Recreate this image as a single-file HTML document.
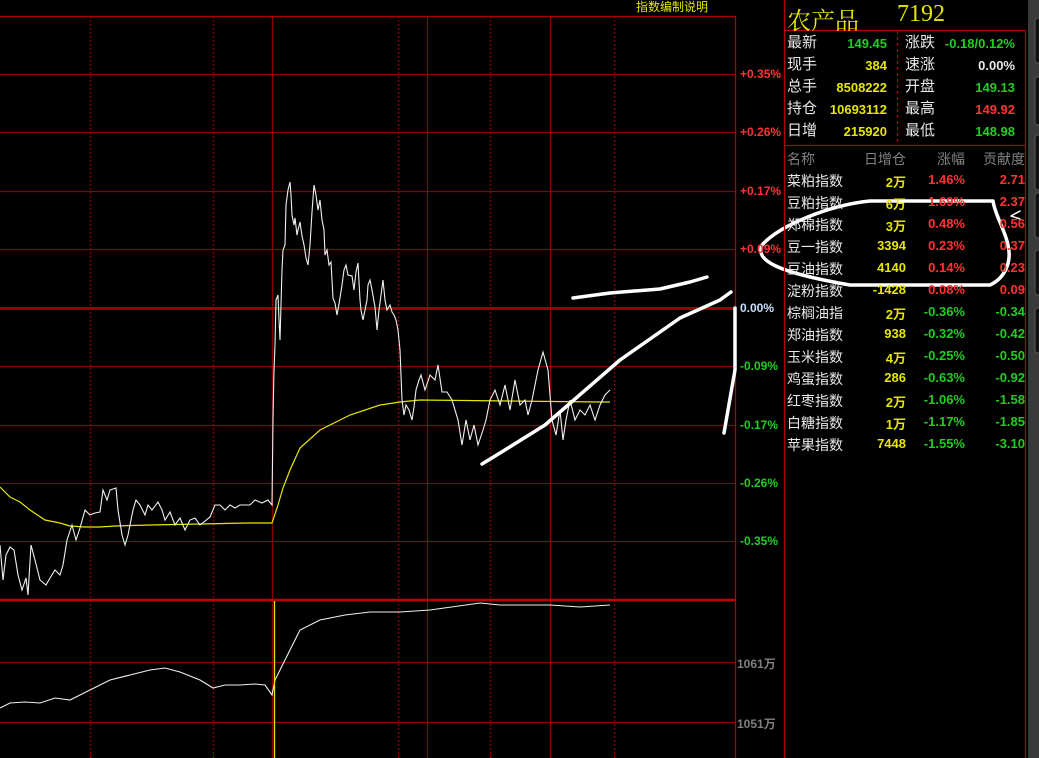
<!DOCTYPE html>
<html><head><meta charset="utf-8"><style>
body{margin:0;background:#000;width:1039px;height:758px;overflow:hidden;position:relative;font-family:"Liberation Sans","Noto Sans CJK SC",sans-serif}
.t{position:absolute;white-space:nowrap;font-size:14px}
.y{color:#e6e600}.g{color:#22cc22}.r{color:#ff3333}.w{color:#e8e8e8}.gr{color:#808080}.b{color:#c8e0ff}
.ax{position:absolute;left:740px;font-size:12px;font-weight:bold}
.num{font-weight:bold;font-size:13px}
</style></head><body>
<svg width="1039" height="758" style="position:absolute;left:0;top:0">
<g stroke="#8a0000" stroke-width="1.3" fill="none">
<line x1="0" y1="16.5" x2="736" y2="16.5" stroke="#b00000"/>
<line x1="0" y1="74.5" x2="736" y2="74.5"/><line x1="0" y1="132.5" x2="736" y2="132.5"/>
<line x1="0" y1="191.5" x2="736" y2="191.5"/><line x1="0" y1="249.5" x2="736" y2="249.5"/>
<line x1="0" y1="366.5" x2="736" y2="366.5"/><line x1="0" y1="425.5" x2="736" y2="425.5"/>
<line x1="0" y1="483.5" x2="736" y2="483.5"/><line x1="0" y1="541.5" x2="736" y2="541.5"/>
<line x1="0" y1="662.5" x2="736" y2="662.5"/><line x1="0" y1="722.5" x2="736" y2="722.5"/>
<line x1="272.5" y1="16" x2="272.5" y2="758"/><line x1="427.5" y1="16" x2="427.5" y2="758"/>
<line x1="550.5" y1="16" x2="550.5" y2="758"/><line x1="735.5" y1="16" x2="735.5" y2="758" stroke="#b00000"/>
<g stroke-dasharray="2,2"><line x1="90.5" y1="16" x2="90.5" y2="758"/><line x1="213.5" y1="16" x2="213.5" y2="758"/><line x1="398.5" y1="16" x2="398.5" y2="758"/><line x1="490.5" y1="16" x2="490.5" y2="758"/><line x1="614.5" y1="16" x2="614.5" y2="758"/></g>
<line x1="0" y1="308.5" x2="736" y2="308.5" stroke="#9a0000" stroke-width="3"/>
<line x1="0" y1="600" x2="736" y2="600" stroke="#c00000" stroke-width="2.5"/>
</g>
<polyline fill="none" stroke="#e6e600" stroke-width="1.2" points="0,487 10,497 20,502 30,510 45,520 60,523 70,526 85,527 100,527 115,526 150,525 200,524 247,523 272,523 278,505 283,488 290,470 300,448 320,430 350,415 380,405 400,402 420,400 600,402 610,402"/>
<polyline fill="none" stroke="#f0f0f0" stroke-width="1.1" points="0,545 3,580 6,555 10,547 14,550 18,575 22,590 26,578 28,595 31,545 35,560 40,580 46,585 50,578 55,570 60,575 63,565 67,540 72,525 76,540 80,528 85,510 90,515 95,513 100,512 103,490 107,500 110,490 116,488 118,510 122,535 125,545 128,535 133,510 136,500 140,505 145,515 148,505 152,510 158,502 162,510 165,520 170,512 175,525 180,518 185,530 190,520 195,518 200,525 210,517 215,505 220,505 225,510 230,505 235,508 240,505 250,505 255,500 262,503 268,500 272,505 273,418 274,370 275,345 276,300 278,295 279,320 280,340 282,270 283,250 285,245 286,205 288,190 290,182 291,195 292,215 294,225 295,218 297,235 298,230 300,222 302,236 304,245 306,258 308,265 310,245 312,212 314,185 316,195 318,210 320,200 322,220 324,230 325,255 327,250 329,265 331,262 333,298 335,303 337,315 340,298 342,285 344,270 346,265 348,275 352,276 354,290 356,272 358,263 360,300 361,310 363,320 365,310 367,300 368,285 370,280 372,290 375,307 377,330 379,310 381,295 383,280 385,300 387,310 390,305 392,312 394,315 396,320 398,330 400,350 402,400 404,415 406,405 409,410 412,420 414,407 416,390 419,380 421,375 425,390 430,375 435,380 438,365 442,392 447,392 452,400 458,420 462,445 466,420 470,440 474,425 478,445 483,430 486,420 490,400 495,390 500,405 505,385 510,410 515,380 520,405 525,400 528,415 532,400 538,370 543,352 548,370 552,420 556,435 560,410 563,440 566,420 570,400 575,420 580,410 585,415 590,405 595,420 600,405 605,395 610,390"/>
<polyline fill="none" stroke="#f0f0f0" stroke-width="1.1" points="0,708 10,703 25,702 40,703 55,698 70,700 90,690 110,680 130,675 150,670 165,668 180,672 200,680 213,688 225,685 240,685 255,684 265,685 272,695 275,680 285,660 300,630 320,620 345,615 370,612 400,612 430,610 480,603 500,605 550,605 580,607 610,605"/>
<line x1="274.5" y1="601" x2="274.5" y2="758" stroke="#e6e600" stroke-width="1.3"/>
<g fill="none" stroke="#fff" stroke-width="3.5" stroke-linecap="round" stroke-linejoin="round">
<polyline points="573,298 610,293 660,289 690,282 707,277"/>
<polyline points="482,464 500,453 545,425 620,360 680,318 720,300 731,292"/>
<polyline points="735,308 735,370 728,410 724,433"/>
<path d="M993,201 L870,201 C830,205 780,225 762,245 C755,260 775,272 850,285 L990,285 C1005,278 1012,262 1008,245 C1005,230 995,215 993,201"/>
<polyline points="1020,211 1011,216 1020,219" stroke-width="1.5"/>
</g>
<g stroke="#b00000" stroke-width="1.3" fill="none">
<line x1="784.5" y1="0" x2="784.5" y2="758"/>
<line x1="1025.5" y1="30" x2="1025.5" y2="758"/>
<line x1="784" y1="30.5" x2="1026" y2="30.5"/>
<line x1="784" y1="145.5" x2="1026" y2="145.5"/>
<line x1="897.5" y1="31" x2="897.5" y2="145" stroke-dasharray="3,3"/>
</g>
<rect x="1028" y="0" width="11" height="758" fill="#3a3a3a"/>
<g fill="#111" stroke="#555"><rect x="1035" y="18" width="10" height="45" rx="3"/><rect x="1035" y="77" width="10" height="48" rx="3"/><rect x="1035" y="135" width="10" height="55" rx="3"/><rect x="1035" y="193" width="10" height="45" rx="3"/><rect x="1035" y="250" width="10" height="45" rx="3"/><rect x="1035" y="308" width="10" height="45" rx="3"/></g>
</svg>
<div class="t y" style="left:636px;top:-2px;font-size:12px">指数编制说明</div>
<div class="ax r" style="top:67px">+0.35%</div><div class="ax r" style="top:125px">+0.26%</div>
<div class="ax r" style="top:184px">+0.17%</div><div class="ax r" style="top:242px">+0.09%</div>
<div class="ax b" style="top:301px">0.00%</div>
<div class="ax g" style="top:359px">-0.09%</div><div class="ax g" style="top:418px">-0.17%</div>
<div class="ax g" style="top:476px">-0.26%</div><div class="ax g" style="top:534px">-0.35%</div>
<div class="ax gr" style="left:737px;top:655px">1061万</div><div class="ax gr" style="left:737px;top:715px">1051万</div>
<div class="t y" style="left:787px;top:1px;font-size:24px;font-family:'Liberation Serif','Noto Serif CJK SC',serif">农产品</div>
<div class="t y" style="left:897px;top:1px;font-size:24px;font-family:'Liberation Serif',serif">7192</div>
<div style="position:absolute;left:787px;top:32px;width:240px;font-size:15px;line-height:22px">
<div class="t w" style="left:0;top:0;font-size:15px">最新</div><div class="t g num" style="right:140px;top:1px">149.45</div><div class="t w" style="left:118px;top:0;font-size:15px">涨跌</div><div class="t g num" style="right:12px;top:1px">-0.18/0.12%</div>
<div class="t w" style="left:0;top:22px;font-size:15px">现手</div><div class="t y num" style="right:140px;top:23px">384</div><div class="t w" style="left:118px;top:22px;font-size:15px">速涨</div><div class="t w num" style="right:12px;top:23px">0.00%</div>
<div class="t w" style="left:0;top:44px;font-size:15px">总手</div><div class="t y num" style="right:140px;top:45px">8508222</div><div class="t w" style="left:118px;top:44px;font-size:15px">开盘</div><div class="t g num" style="right:12px;top:45px">149.13</div>
<div class="t w" style="left:0;top:66px;font-size:15px">持仓</div><div class="t y num" style="right:140px;top:67px">10693112</div><div class="t w" style="left:118px;top:66px;font-size:15px">最高</div><div class="t r num" style="right:12px;top:67px">149.92</div>
<div class="t w" style="left:0;top:88px;font-size:15px">日增</div><div class="t y num" style="right:140px;top:89px">215920</div><div class="t w" style="left:118px;top:88px;font-size:15px">最低</div><div class="t g num" style="right:12px;top:89px">148.98</div>
</div>
<div style="position:absolute;left:787px;top:148px;width:240px;font-size:14px;line-height:22px">
<div class="t gr" style="left:0;top:0">名称</div><div class="t gr" style="left:77px;top:0">日增仓</div><div class="t gr" style="left:150px;top:0">涨幅</div><div class="t gr" style="left:196px;top:0">贡献度</div>
</div>
<div id="rows"></div>
<script>
const rows=[["菜粕指数","2万","1.46%","2.71",1],["豆粕指数","6万","1.69%","2.37",1],["郑棉指数","3万","0.48%","0.56",1],["豆一指数","3394","0.23%","0.37",1],["豆油指数","4140","0.14%","0.23",1],["淀粉指数","-1428","0.08%","0.09",1],["棕榈油指","2万","-0.36%","-0.34",0],["郑油指数","938","-0.32%","-0.42",0],["玉米指数","4万","-0.25%","-0.50",0],["鸡蛋指数","286","-0.63%","-0.92",0],["红枣指数","2万","-1.06%","-1.58",0],["白糖指数","1万","-1.17%","-1.85",0],["苹果指数","7448","-1.55%","-3.10",0]];
let h="";rows.forEach((r,i)=>{const y=171+i*22;const c=r[4]?"r":"g";
h+=`<div class="t w" style="left:787px;top:${y}px">${r[0]}</div><div class="t y num" style="right:${1039-906}px;top:${y+1}px">${r[1]}</div><div class="t ${c} num" style="right:${1039-965}px;top:${y+1}px">${r[2]}</div><div class="t ${c} num" style="right:${1039-1025}px;top:${y+1}px">${r[3]}</div>`;});
document.getElementById("rows").innerHTML=h;
</script>
</body></html>
